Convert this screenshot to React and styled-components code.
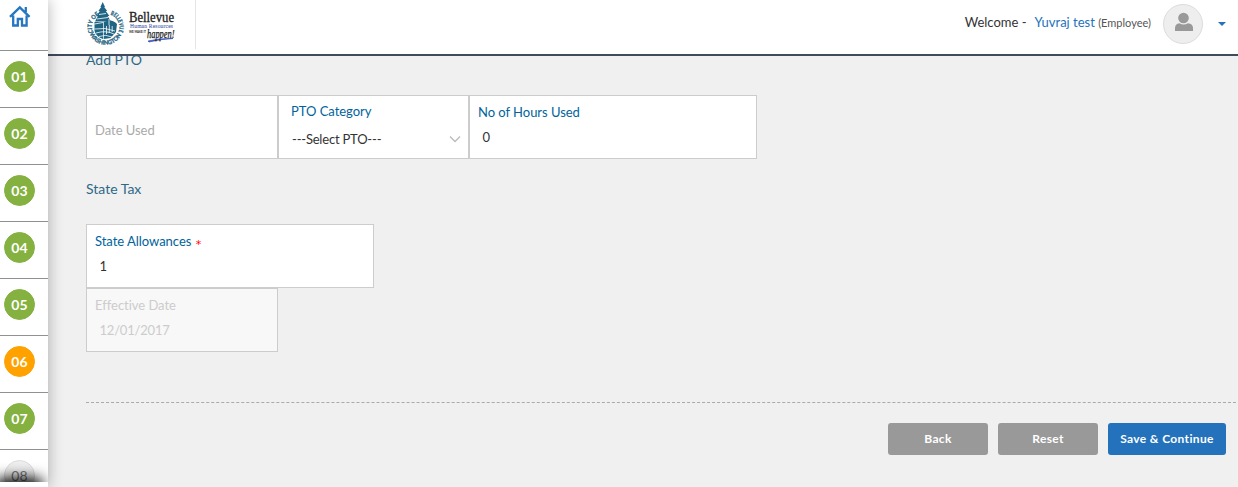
import React from 'react';
import styled, { createGlobalStyle } from 'styled-components';

const GlobalStyle = createGlobalStyle`
  *, *::before, *::after {
    box-sizing: border-box;
  }

  body {
    margin: 0;
    overflow: hidden;
    background: #f0f0f0;
    color: #333;
    font-family: Lato, sans-serif;
    font-size: 14px;
  }

  button, input {
    font-family: inherit;
  }
`;

const Page = styled.div`
  display: flex;
  height: 487px;
  overflow: hidden;
`;

const Sidebar = styled.nav`
  position: relative;
  height: 482px;
  overflow: hidden;

  &::after {
    content: '';
    position: absolute;
    left: 0;
    bottom: -10px;
    width: 38px;
    height: 10px;
    box-shadow: 0 0 14px 4px #000;
  }
`;

const SidebarShadow = styled.div`
  position: relative;
  z-index: 3;
  flex: 0 0 48px;
  background: #fff;
  box-shadow: 0 0 14px rgba(0, 0, 0, 0.3);
`;

const Home = styled.a`
  display: block;
  height: 50px;
  padding: 5px 0 0 9px;
`;

const Step = styled.div`
  height: 57px;
  padding: 10px 0 0 4px;
  border-top: 1px solid #919191;
`;

const Badge = styled.span`
  display: block;
  width: 31px;
  height: 31px;
  border: 1px solid ${p => p.border || p.color};
  border-radius: 50%;
  background: ${p => p.color};
  color: ${p => p.text || '#fff'};
  font-size: 14px;
  font-weight: ${p => (p.text ? 400 : 700)};
  letter-spacing: 0.2px;
  line-height: 30px;
  text-align: center;
`;

const Main = styled.div`
  flex: 1;
  min-width: 0;
  display: flex;
  flex-direction: column;
`;

const Header = styled.header`
  position: relative;
  z-index: 2;
  flex: 0 0 56px;
  display: flex;
  align-items: flex-start;
  justify-content: space-between;
  border-bottom: 2px solid #3f4a5c;
  background: #fff;
`;

const Brand = styled.div`
  width: 148px;
  height: 49px;
  padding-left: 38px;
  border-right: 1px solid #e4e4e4;
`;

const User = styled.div`
  display: flex;
  align-items: center;
  height: 48px;
  padding-right: 12px;
`;

const Welcome = styled.span`
  margin-right: 8px;
  padding-bottom: 4px;
  color: #333;
  font-size: 13px;
`;

const UserName = styled.span`
  margin-right: 12px;
  padding-bottom: 4px;
  color: #2372bb;
  font-size: 13px;

  small {
    color: #555;
    font-size: 11px;
  }
`;

const Avatar = styled.span`
  width: 40px;
  height: 40px;
  border: 1px solid #dcdcdc;
  border-radius: 50%;
  background: #eee;
`;

const Caret = styled.span`
  margin-left: 15px;
  border: 4px solid transparent;
  border-top-color: #2372bb;
  border-bottom: 0;
`;

const Content = styled.main`
  margin-top: -6px;
  padding-left: 38px;
`;

const Title = styled.h2`
  height: 20px;
  margin: 0 0 25px;
  color: #2d6987;
  font-size: 14px;
  font-weight: 400;
  line-height: 20px;
`;

const Row = styled.div`
  display: flex;
  margin-bottom: ${p => p.gap || 0}px;
`;

const Field = styled.div`
  display: flex;
  flex-direction: column;
  width: ${p => p.width}px;
  height: 64px;
  padding: ${p => p.top || 7}px 8px 0;
  border: 1px solid #ccc;
  background: ${p => (p.disabled ? '#f8f8f8' : '#fff')};
  color: ${p => (p.disabled ? '#ccc' : '#333')};
`;

const Label = styled.label`
  height: 18px;
  padding-left: ${p => p.indent || 0}px;
  color: ${p => p.color || '#00639c'};
  font-size: 13px;
  letter-spacing: -0.03px;
  line-height: 18px;
  white-space: nowrap;
`;

const Required = styled.span`
  margin-left: 1px;
  color: #f00;
  font-family: 'DejaVu Sans', sans-serif;
  font-size: 11px;
  line-height: 0;
  vertical-align: -2px;
`;

const Value = styled.div`
  display: flex;
  align-items: center;
  justify-content: space-between;
  height: 18px;
  margin: ${p => p.offset || 7}px -1px 0 0;
  padding-left: ${p => p.indent || 4.5}px;
  font-size: 13px;
  letter-spacing: -0.2px;
  line-height: 18px;
`;

const Footer = styled.footer`
  display: flex;
  justify-content: flex-end;
  gap: 10px;
  margin: 50px 2px 0 0;
  padding: 20px 10px 0 0;
  border-top: 1px dashed #aaa;
`;

const Button = styled.button`
  width: ${p => (p.$primary ? 118 : 100)}px;
  height: 32px;
  padding: 0 0 2px;
  border: 0;
  border-radius: 3px;
  background: ${p => (p.$primary ? '#2372bb' : '#999')};
  color: #fff;
  font-size: 12px;
  font-weight: 700;
  letter-spacing: 0.35px;
`;

const HomeIcon = () => (
  <svg width="22" height="22" viewBox="0 0 22 22" fill="none" stroke="#2576c3" strokeWidth="2.3">
    <path d="M1 11.8 10.8 2.3 20.6 11.8M16.8 7V2M4.2 10.5V20.5H8.8V14H13V20.5H17.6V10.5" />
  </svg>
);

const Logo = () => (
  <svg width="92" height="48" viewBox="86 0 92 48">
    <defs>
      <path id="ringLeft" d="M93 32.5A13.2 13.2 0 0 1 100.2 14.8" />
      <path id="ringRight" d="M110.4 14.6A13.2 13.2 0 0 1 118 33" />
      <path id="ringBottom" d="M89.6 33.8A17.3 17.3 0 0 0 121.8 33.8" />
    </defs>
    <g fill="#1f6583">
      <path d="M102.7 2 105 7 104.2 7 107.2 11 105.8 11 109.4 16 107.6 16 111 21.5H95L98 16 96.4 16 99.8 11 98.4 11 101.2 7 100.4 7Z" />
      <path d="M94.5 22H103V39Q96.5 37 94.5 31ZM103.7 22Q112 18 117 24L116 32 110.5 38 103.7 39Z" />
    </g>
    <path d="M99 14.5 106 13.5M97 19 108 17.5M94.5 24 103 22.5M106.5 26V34M109.3 25V33M112.2 26V32M94.5 29Q105 27 115 31M96 33Q106 30 114 34M99 36.5Q106 34 112 37M109 19V25" fill="none" stroke="#fff" strokeWidth=".8" />
    <g fill="#1f6583" stroke="#1f6583" strokeWidth=".3" fontFamily="Lato, sans-serif" fontSize="6" fontWeight="700">
      <text><textPath href="#ringLeft" textLength="20" lengthAdjust="spacingAndGlyphs">CITY OF</textPath></text>
      <text><textPath href="#ringRight" textLength="21" lengthAdjust="spacingAndGlyphs">BELLEVUE</textPath></text>
      <text><textPath href="#ringBottom" textLength="40" lengthAdjust="spacingAndGlyphs">WASHINGTON</textPath></text>
    </g>
    <text x="129" y="22" fontFamily="Liberation Serif, serif" fontSize="14" fill="#222" stroke="#222" strokeWidth=".3" textLength="45" lengthAdjust="spacingAndGlyphs">Bellevue</text>
    <text x="130" y="27.5" fontFamily="Liberation Serif, serif" fontSize="5.5" fill="#5268ae" stroke="#5268ae" strokeWidth=".1" textLength="43">Human Resources</text>
    <text x="129" y="33" fontFamily="Lato, sans-serif" fontSize="3.5" fontWeight="700" fill="#222" textLength="17" lengthAdjust="spacingAndGlyphs">WE MAKE IT</text>
    <path d="M148 41Q159 38 173 38.5Q160 39 149 42Z" fill="#3a55b4" stroke="#3a55b4" strokeWidth=".7" />
    <text x="147" y="37.5" fontFamily="Liberation Serif, serif" fontSize="11.5" fontStyle="italic" fill="#222" stroke="#222" strokeWidth=".25" textLength="27.5" lengthAdjust="spacingAndGlyphs">happen!</text>
  </svg>
);

const UserIcon = () => (
  <svg width="38" height="38" viewBox="0 0 38 38" fill="#999">
    <circle cx="19.5" cy="13" r="5.3" />
    <path d="M11 26V23Q11 19 15.5 18.2Q19.5 21 24 18.2Q29 19 29 23V26Z" />
  </svg>
);

const steps = ['01', '02', '03', '04', '05', '06', '07', '08'];

const stepColors = {
  '06': { color: '#ffa200' },
  '08': { color: '#eee', border: '#ddd', text: '#777' },
};

const App = () => (
  <Page>
    <GlobalStyle />
    <SidebarShadow>
      <Sidebar>
        <Home href="#"><HomeIcon /></Home>
        {steps.map(s => (
          <Step key={s}>
            <Badge color="#84b140" {...stepColors[s]}>{s}</Badge>
          </Step>
        ))}
      </Sidebar>
    </SidebarShadow>
    <Main>
      <Header>
        <Brand><Logo /></Brand>
        <User>
          <Welcome>Welcome -</Welcome>
          <UserName>
            Yuvraj test <small>(Employee)</small>
          </UserName>
          <Avatar><UserIcon /></Avatar>
          <Caret />
        </User>
      </Header>
      <Content>
        <Title>Add PTO</Title>
        <Row gap={20}>
          <Field width={192} top={25}>
            <Label color="#aaa">Date Used</Label>
          </Field>
          <Field width={191} top={6}>
            <Label indent={4}>PTO Category</Label>
            <Value offset={10} indent={5}>
              ---Select PTO---
              <svg width="12" height="8" viewBox="0 0 12 8" fill="none" stroke="#bbb" strokeWidth="1.3">
                <path d="M1 1.5 6 6.5 11 1.5" />
              </svg>
            </Value>
          </Field>
          <Field width={288}>
            <Label>No of Hours Used</Label>
            <Value>0</Value>
          </Field>
        </Row>
        <Title>State Tax</Title>
        <Row>
          <Field width={288}>
            <Label>State Allowances <Required>*</Required></Label>
            <Value>1</Value>
          </Field>
        </Row>
        <Row>
          <Field width={192} disabled>
            <Label color="#ccc">Effective Date</Label>
            <Value>12/01/2017</Value>
          </Field>
        </Row>
        <Footer>
          <Button>Back</Button>
          <Button>Reset</Button>
          <Button $primary>Save &amp; Continue</Button>
        </Footer>
      </Content>
    </Main>
  </Page>
);

export default App;
